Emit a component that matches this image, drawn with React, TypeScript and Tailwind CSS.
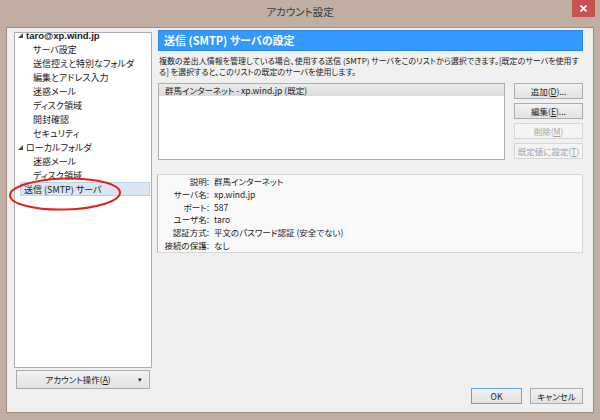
import React from "react";

const treeRows = [
  { label: "taro@xp.wind.jp", level: 0, bold: true },
  { label: "サーバ設定", level: 1 },
  { label: "送信控えと特別なフォルダ", level: 1 },
  { label: "編集とアドレス入力", level: 1 },
  { label: "迷惑メール", level: 1 },
  { label: "ディスク領域", level: 1 },
  { label: "開封確認", level: 1 },
  { label: "セキュリティ", level: 1 },
  { label: "ローカルフォルダ", level: 0, folder: true },
  { label: "迷惑メール", level: 1 },
  { label: "ディスク領域", level: 1 },
  { label: "送信 (SMTP) サーバ", level: 0, selected: true },
];

const details = [
  ["説明:", "群馬インターネット"],
  ["サーバ名:", "xp.wind.jp"],
  ["ポート:", "587"],
  ["ユーザ名:", "taro"],
  ["認証方式:", "平文のパスワード認証 (安全でない)"],
  ["接続の保護:", "なし"],
];

function Expander() {
  return (
    <svg width="5" height="5" viewBox="0 0 5 5" className="shrink-0">
      <polygon points="0,5 5,5 5,0" fill="#4a4a4a" />
    </svg>
  );
}

function Btn({
  children,
  disabled,
  className = "",
}: {
  children: React.ReactNode;
  disabled?: boolean;
  className?: string;
}) {
  return (
    <div
      className={
        "h-[16px] flex items-center justify-center border text-[8.5px] leading-none " +
        (disabled
          ? "border-[#d5d5d5] bg-[#f4f4f4] text-[#a3a3a3] "
          : "border-[#acacac] bg-gradient-to-b from-[#f2f2f2] to-[#e3e3e3] text-[#1a1a1a] ") +
        className
      }
    >
      {children}
    </div>
  );
}

export default function App() {
  return (
    <div className="w-[600px] h-[420px] bg-[#bfaea1] flex flex-col font-['Noto_Sans_CJK_JP','Noto_Sans',sans-serif] [font-feature-settings:'palt'] text-[#1a1a1a] overflow-hidden">
      {/* title bar */}
      <div className="h-[27px] grid grid-cols-[1fr_auto_1fr]">
        <div />
        <div className="pt-[5px] text-[10.5px] leading-[14px] text-[#3a3a3a]">アカウント設定</div>
        <div className="flex justify-end pr-[5px]">
          <div className="w-[23px] h-[17px] bg-[#c75050] flex items-center justify-center">
            <svg width="7" height="7" viewBox="0 0 7 7">
              <path d="M0.5 0.5 L6.5 6.5 M6.5 0.5 L0.5 6.5" stroke="#fff" strokeWidth="1.6" />
            </svg>
          </div>
        </div>
      </div>

      {/* client area */}
      <div className="ml-[6px] w-[588px] h-[386px] border border-[#a08d7d] bg-[#f0f0f0] flex pl-[7px] pt-[2px]">
        {/* left column */}
        <div className="w-[138px] flex flex-col">
          <div className="relative mt-[2px] h-[336px] border border-[#abadb3] bg-white">
            <div className="-mt-[4px] flex flex-col">
              {treeRows.map((r, i) => (
                <div
                  key={i}
                  className={
                    "h-[13.94px] flex items-center " +
                    (r.level === 0 ? "pl-[3px]" : "pl-[18px]")
                  }
                >
                  {r.selected ? (
                    <div className="ml-[2px] mr-[1px] flex-1 h-[14px] bg-[#dbe6f3] border border-[#bcd0e8] flex items-center pl-[3px] text-[9px] leading-none">
                      {r.label}
                    </div>
                  ) : (
                    <>
                      {r.level === 0 && (
                        <span className="w-[8px] flex items-center">
                          <Expander />
                        </span>
                      )}
                      <span
                        className={
                          r.bold
                            ? "text-[9.5px] font-bold font-['Liberation_Sans',sans-serif] leading-none"
                            : "text-[9px] leading-none"
                        }
                      >
                        {r.label}
                      </span>
                    </>
                  )}
                </div>
              ))}
            </div>
            {/* red annotation ring */}
            <svg
              className="absolute left-[-7px] top-[143px] pointer-events-none"
              width="116"
              height="36"
              viewBox="0 0 116 36"
            >
              <ellipse
                cx="57"
                cy="18"
                rx="55"
                ry="15.5"
                fill="none"
                stroke="#e3221d"
                strokeWidth="2"
                transform="rotate(-1.5 57 18)"
              />
            </svg>
          </div>
          <div className="mt-[2px] ml-[2px] w-[134px] h-[19px] border border-[#acacac] bg-gradient-to-b from-[#f2f2f2] to-[#e3e3e3] flex items-center text-[8.5px] leading-none">
            <span className="flex-1 text-center pl-[8px]">
              アカウント操作(<span className="underline">A</span>)
            </span>
            <span className="w-[18px] text-center text-[7px]">▾</span>
          </div>
        </div>

        {/* right column */}
        <div className="ml-[6px] w-[425px] h-[374px] flex flex-col">
          <div className="h-[21px] bg-[#3399ff] border border-[#2f86de] flex items-center pl-[5px] text-white font-bold text-[11px] leading-none">
            送信 (SMTP) サーバの設定
          </div>
          <div className="mt-[4px] pl-[1px] text-[8px] leading-[11px] whitespace-nowrap">
            複数の差出人情報を管理している場合、使用する送信 (SMTP) サーバをこのリストから選択できます。[既定のサーバを使用す
            <br />
            る] を選択すると、このリストの既定のサーバを使用します。
          </div>
          <div className="mt-[6px] flex">
            <div className="w-[347px] h-[77px] border border-[#abadb3] bg-white">
              <div className="h-[12px] bg-gradient-to-b from-[#ececec] to-[#dcdcdc] flex items-center pl-[6px] text-[8.5px] leading-none">
                群馬インターネット - xp.wind.jp (既定)
              </div>
            </div>
            <div className="ml-auto w-[69px] flex flex-col gap-[4px]">
              <Btn>
                追加(<span className="underline">D</span>)...
              </Btn>
              <Btn>
                編集(<span className="underline">E</span>)...
              </Btn>
              <Btn disabled>
                削除(<span className="underline">M</span>)
              </Btn>
              <Btn disabled>
                既定値に設定(<span className="underline">T</span>)
              </Btn>
            </div>
          </div>
          <div className="mt-[14px] -ml-[1px] h-[79px] border border-[#d6d6d6] border-l-[#b9b9b9] bg-[#f9f9f9] grid grid-cols-[51px_1fr] content-start gap-x-[5px] text-[8.5px] leading-[12.8px]">
            {details.map(([k, v]) => (
              <React.Fragment key={k}>
                <div className="text-right">{k}</div>
                <div>{v}</div>
              </React.Fragment>
            ))}
          </div>
          <div className="mt-auto self-end flex gap-[8px]">
            <Btn className="w-[51px] !border-[#5fa4e6]">OK</Btn>
            <Btn className="w-[53px]">キャンセル</Btn>
          </div>
        </div>
      </div>
    </div>
  );
}
